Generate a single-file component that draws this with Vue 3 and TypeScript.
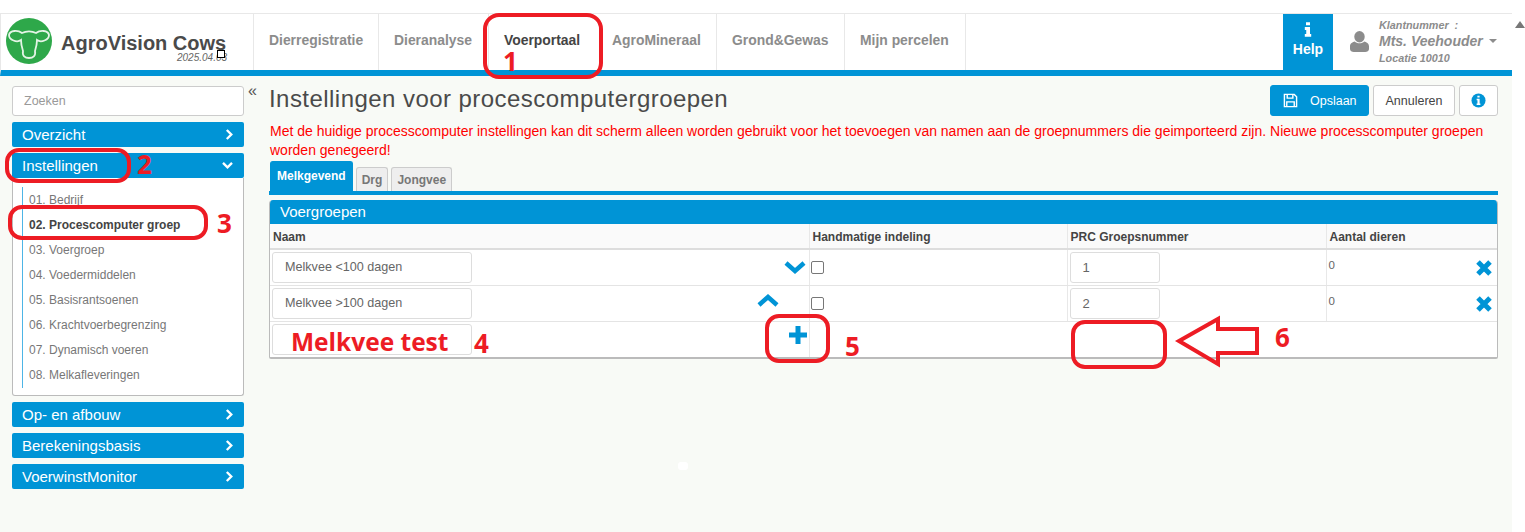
<template>
  <div class="app">
    <div class="content">
      <div class="top-gap"></div>
      <header class="header">
        <div class="brand">
          <svg class="logo" viewBox="0 0 46 46" width="46" height="46">
            <circle cx="23" cy="23" r="23" fill="#2ea84a" />
            <path d="M16 15 C20 13 26 13 30 15 C34 12 42 12 43 17 C43 22 35 25 31 22 C31 27 30 30 29 33 C30 38 27 40 23 40 C19 40 16 38 17 33 C16 30 15 27 15 22 C11 25 3 22 3 17 C4 12 12 12 16 15 Z" fill="none" stroke="#e4f4e6" stroke-width="1.8" />
          </svg>
          <div class="brand-text">
            <div class="brand-name">AgroVision Cows</div>
            <div class="brand-version">2025.04.03</div>
          </div>
          <span class="cursor-box"></span>
        </div>
        <nav class="nav">
          <a v-for="item in navItems" :key="item.label" class="nav-item" :class="{ active: item.active }" :style="{ width: item.width + 'px' }">{{ item.label }}</a>
        </nav>
        <div class="help">
          <svg viewBox="0 0 10 18" width="8" height="15"><path d="M2.5 0h5v3.6h-5zM1 6h6.500v8.500H9V18H1v-3.500h1.800V9.500H1z" fill="#fff" /></svg>
          <span>Help</span>
        </div>
        <div class="user">
          <svg class="user-icon" viewBox="0 0 20 22" width="19" height="21">
            <ellipse cx="10" cy="6" rx="5.500" ry="6" fill="#8c8c8c" />
            <path d="M0 19 V16 C0 13 3 11.500 5 11 C7 13.500 13 13.500 15 11 C17 11.500 20 13 20 16 V19 C20 21 18 22 16 22 H4 C2 22 0 21 0 19 Z" fill="#8c8c8c" />
          </svg>
          <div class="user-text">
            <div class="user-small">Klantnummer &nbsp;:</div>
            <div class="user-name">Mts. Veehouder <span class="caret"></span></div>
            <div class="user-loc">Locatie 10010</div>
          </div>
        </div>
      </header>

      <div class="body">
        <aside class="sidebar">
          <div class="search">Zoeken</div>
          <div class="menu-head">Overzicht<svg viewBox="0 0 10 14" width="9" height="13"><path d="M2 2l5 5-5 5" class="chev" /></svg></div>
          <div class="menu-head">Instellingen<svg viewBox="0 0 14 10" width="13" height="9"><path d="M2 2l5 5 5-5" class="chev" /></svg></div>
          <div class="submenu">
            <ul>
              <li v-for="(sub, i) in subItems" :key="sub" :class="{ current: i === 1 }">{{ sub }}</li>
            </ul>
          </div>
          <div v-for="head in lowerHeads" :key="head" class="menu-head">{{ head }}<svg viewBox="0 0 10 14" width="9" height="13"><path d="M2 2l5 5-5 5" class="chev" /></svg></div>
        </aside>

        <div class="collapse">«</div>

        <main class="main">
          <div class="title-row">
            <h1>Instellingen voor procescomputergroepen</h1>
            <div class="actions">
              <button class="btn primary">
                <svg viewBox="0 0 16 16" width="15" height="15">
                  <path d="M1.500 1.500h10.500l2.500 2.500v10.500h-13z" fill="none" stroke="#fff" stroke-width="1.500" />
                  <path d="M4.500 2v3.500h6V2M4 14.500V9.500h8v5" fill="none" stroke="#fff" stroke-width="1.500" />
                </svg>
                Opslaan
              </button>
              <button class="btn cancel">Annuleren</button>
              <button class="btn info">
                <svg viewBox="0 0 16 16" width="15" height="15">
                  <circle cx="8" cy="8" r="7.500" fill="#0094d6" />
                  <path d="M6.800 2.800h2.400v2h-2.400zM6 6.200h3.200v5H10v1.500H6v-1.500h.9V7.700H6z" fill="#fff" />
                </svg>
              </button>
            </div>
          </div>
          <p class="warning">Met de huidige processcomputer instellingen kan dit scherm alleen worden gebruikt voor het toevoegen van namen aan de groepnummers die geimporteerd zijn. Nieuwe processcomputer groepen worden genegeerd!</p>
          <div class="tabs">
            <div class="tab active">Melkgevend</div>
            <div class="tab">Drg</div>
            <div class="tab">Jongvee</div>
          </div>
          <section class="panel">
            <div class="panel-head">Voergroepen</div>
            <table>
              <colgroup>
                <col style="width: 539px" />
                <col style="width: 258px" />
                <col style="width: 259px" />
                <col />
              </colgroup>
              <thead>
                <tr>
                  <th>Naam</th>
                  <th>Handmatige indeling</th>
                  <th>PRC Groepsnummer</th>
                  <th>Aantal dieren</th>
                </tr>
              </thead>
              <tbody>
                <tr v-for="row in rows" :key="row.nr">
                  <td>
                    <div class="name-cell">
                      <div class="field name">{{ row.name }}</div>
                      <svg class="move" :class="row.dir" viewBox="0 0 24 14" width="24" height="14">
                        <path :d="row.dir === 'down' ? 'M3 3l9 8 9-8' : 'M3 11l9-8 9 8'" fill="none" stroke="#0094d6" stroke-width="4.500" />
                      </svg>
                    </div>
                  </td>
                  <td><span class="check"></span></td>
                  <td><div class="field nr">{{ row.nr }}</div></td>
                  <td>
                    <div class="count-cell">
                      <span class="count">0</span>
                      <svg class="remove" viewBox="0 0 18 18" width="18" height="18"><path d="M3 3l12 12M15 3L3 15" fill="none" stroke="#0094d6" stroke-width="5" /></svg>
                    </div>
                  </td>
                </tr>
                <tr class="add-row">
                  <td>
                    <div class="name-cell">
                      <div class="field name"></div>
                      <svg class="plus" viewBox="0 0 18 18" width="18" height="18"><path d="M9 0v18M0 9h18" fill="none" stroke="#0094d6" stroke-width="5" /></svg>
                    </div>
                  </td>
                  <td></td>
                  <td></td>
                  <td></td>
                </tr>
              </tbody>
            </table>
          </section>
        </main>
      </div>
    </div>
    <div class="scrollbar"><span class="scroll-up"></span></div>

    <!-- annotaties uit de handleiding -->
    <svg class="marks" viewBox="0 0 1525 532" width="1525" height="532">
      <g fill="none" stroke="#ed1c24" stroke-width="4">
        <rect x="485" y="15" width="116" height="62" rx="14" />
        <rect x="7" y="150" width="122" height="31" rx="12" />
        <rect x="10" y="207" width="196" height="31" rx="12" />
        <rect x="767" y="316" width="61" height="45" rx="12" />
        <rect x="1073" y="322" width="92" height="45" rx="12" />
        <path d="M1179 341L1218 319V329H1257V353H1218V364Z" />
      </g>
    </svg>
    <span class="mark-text big">Melkvee test</span>
    <span v-for="m in markNumbers" :key="m.n" class="mark-text num" :style="{ left: m.x + 'px', top: m.y + 'px' }">{{ m.n }}</span>
    <span class="spot"></span>
  </div>
</template>

<script setup lang="ts">
const navItems = [
  { label: 'Dierregistratie', width: 125 },
  { label: 'Dieranalyse', width: 110 },
  { label: 'Voerportaal', width: 108, active: true },
  { label: 'AgroMineraal', width: 120 },
  { label: 'Grond&Gewas', width: 128 },
  { label: 'Mijn percelen', width: 121 }
]

const subItems = [
  '01. Bedrijf',
  '02. Procescomputer groep',
  '03. Voergroep',
  '04. Voedermiddelen',
  '05. Basisrantsoenen',
  '06. Krachtvoerbegrenzing',
  '07. Dynamisch voeren',
  '08. Melkafleveringen'
]

const lowerHeads = ['Op- en afbouw', 'Berekeningsbasis', 'VoerwinstMonitor']

const rows = [
  { name: 'Melkvee <100 dagen', nr: 1, dir: 'down' },
  { name: 'Melkvee >100 dagen', nr: 2, dir: 'up' }
]

const markNumbers = [
  { n: 1, x: 503, y: 50 },
  { n: 2, x: 137, y: 153 },
  { n: 3, x: 217, y: 212 },
  { n: 4, x: 474, y: 332 },
  { n: 5, x: 845, y: 335 },
  { n: 6, x: 1275, y: 326 }
]
</script>

<style>
html,
body {
  margin: 0;
  overflow: hidden;
}
</style>

<style scoped>
.app {
  position: relative;
  display: flex;
  width: 1525px;
  height: 532px;
  overflow: hidden;
  background: #fff;
  font-family: "Liberation Sans", Arial, sans-serif;
  color: #444;
}

.content {
  width: 1513px;
  display: flex;
  flex-direction: column;
  background: #f8faf6;
}

.top-gap {
  height: 13px;
  background: #fff;
  border-bottom: 1px solid #e8e8e8;
}

.header {
  display: flex;
  height: 56px;
  flex: none;
  background: #fff;
  border-bottom: 6px solid #0094d6;
  border-left: 1px solid #e8e8e8;
}

.brand {
  position: relative;
  display: flex;
  align-items: flex-start;
  width: 253px;
  flex: none;
  padding: 4px 0 0 5px;
  box-sizing: border-box;
  border-right: 1px solid #e8e8e8;
}

.brand-text {
  margin-left: 9px;
}

.brand-name {
  margin-top: 15px;
  font-size: 20px;
  font-weight: bold;
  color: #4a4a4a;
  line-height: 21px;
  white-space: nowrap;
}

.brand-version {
  margin: -2px 0 0 116px;
  font-size: 10px;
  font-style: italic;
  line-height: 11px;
  color: #666;
}

.cursor-box {
  position: absolute;
  left: 216px;
  top: 36px;
  width: 6px;
  height: 6px;
  border: 1px solid #000;
  background: #fff;
}

.nav {
  display: flex;
  flex: 1;
}

.nav-item {
  box-sizing: border-box;
  padding: 18px 0 0 15px;
  font-size: 13.900px;
  font-weight: bold;
  color: #8c8c8c;
  border-right: 1px solid #e8e8e8;
  white-space: nowrap;
}

.nav-item.active {
  color: #444;
  border-right: none;
}

.help {
  display: flex;
  flex-direction: column;
  align-items: center;
  gap: 4px;
  width: 50px;
  padding-top: 8px;
  box-sizing: border-box;
  background: #0094d6;
  color: #fff;
  font-size: 14px;
  font-weight: bold;
}

.user {
  display: flex;
  align-items: center;
  width: 179px;
  padding-left: 17px;
  box-sizing: border-box;
  color: #8c8c8c;
  font-style: italic;
  font-weight: bold;
}

.user-icon {
  flex: none;
  margin-top: -2px;
}

.user-text {
  margin-left: 10px;
}

.user-small {
  font-size: 10.800px;
  line-height: 13px;
}

.user-name {
  font-size: 14px;
  line-height: 19px;
  white-space: nowrap;
}

.user-loc {
  font-size: 10.800px;
  line-height: 14px;
}

.caret {
  display: inline-block;
  margin-left: 2px;
  vertical-align: 3px;
  border: 4px solid transparent;
  border-top-color: #8c8c8c;
  border-bottom: none;
}

.body {
  display: flex;
  align-items: flex-start;
  flex: 1;
}

.sidebar {
  width: 232px;
  flex: none;
  margin: 10px 0 0 12px;
}

.search {
  height: 30px;
  box-sizing: border-box;
  padding: 0 11px;
  line-height: 28px;
  font-size: 12.500px;
  color: #999;
  background: #fff;
  border: 1px solid #ccc;
  border-radius: 3px;
}

.menu-head {
  display: flex;
  align-items: center;
  justify-content: space-between;
  height: 25px;
  margin-top: 6px;
  padding: 0 10px 0 10px;
  box-sizing: border-box;
  background: #0094d6;
  color: #fff;
  font-size: 15px;
  border-radius: 2px;
}

.chev {
  fill: none;
  stroke: #fff;
  stroke-width: 2.600;
}

.submenu {
  background: #fff;
  height: 218px;
  box-sizing: border-box;
  padding-top: 9px;
  border: 1px solid #bbb;
  border-top: none;
  border-radius: 0 0 3px 3px;
}

.submenu ul {
  list-style: none;
  margin: 0 0 0 9px;
  padding: 1px 0 0 6px;
  border-left: 1px solid #4db5e6;
}

.submenu li {
  height: 25px;
  line-height: 25px;
  font-size: 12px;
  color: #777;
}

.submenu li.current {
  font-weight: bold;
  color: #444;
}

.collapse {
  width: 25px;
  flex: none;
  margin-top: 7px;
  padding-left: 4px;
  box-sizing: border-box;
  font-size: 16px;
  line-height: 16px;
  color: #555;
}

.main {
  width: 1229px;
  flex: none;
}

.title-row {
  display: flex;
  justify-content: space-between;
  height: 46px;
  align-items: flex-start;
}

h1 {
  margin: 9px 0 0;
  font-size: 24px;
  font-weight: normal;
  line-height: 28px;
  letter-spacing: 0.45px;
  color: #4a4a4a;
}

.actions {
  display: flex;
  gap: 4px;
  margin-top: 9px;
}

.btn {
  height: 31px;
  padding: 0;
  font: 12.500px "Liberation Sans", Arial, sans-serif;
  color: #444;
  background: #fff;
  border: 1px solid #ccc;
  border-radius: 3px;
}

.btn.primary {
  display: flex;
  align-items: center;
  gap: 12px;
  width: 99px;
  padding-left: 12px;
  background: #0094d6;
  border-color: #0094d6;
  color: #fff;
}

.btn.cancel {
  width: 82px;
}

.btn.info {
  display: flex;
  align-items: center;
  justify-content: center;
  width: 39px;
}

.warning {
  margin: 0 0 0 1px;
  font-size: 14px;
  line-height: 19px;
  color: #f00;
}

.tabs {
  display: flex;
  align-items: flex-end;
  gap: 3px;
  height: 30px;
  margin-top: 1px;
  padding-left: 1px;
  border-bottom: 4px solid #0094d6;
}

.tab {
  box-sizing: border-box;
  height: 24px;
  padding: 0 5px;
  line-height: 24px;
  font-size: 12px;
  font-weight: bold;
  color: #777;
  background: #eee;
  border: 1px solid #ccc;
  border-bottom: none;
  border-radius: 3px 3px 0 0;
}

.tab.active {
  height: 30px;
  padding: 0 6px;
  line-height: 28px;
  color: #fff;
  background: #0094d6;
  border-color: #0094d6;
}

.panel {
  margin-top: 5px;
  background: #fff;
  border: 1px solid #bbb;
  border-top: none;
  border-bottom-width: 2px;
  border-radius: 4px 4px 2px 2px;
  overflow: hidden;
}

.panel-head {
  height: 24px;
  padding-left: 10px;
  line-height: 24px;
  font-size: 15px;
  color: #fff;
  background: #0094d6;
}

table {
  width: 100%;
  border-collapse: collapse;
  table-layout: fixed;
}

th {
  height: 25px;
  padding: 2px 3px 0;
  box-sizing: border-box;
  text-align: left;
  font-size: 12px;
  color: #444;
  background: #fafafa;
  border-bottom: 2px solid #ddd;
  border-right: 1px solid #e8e8e8;
}

td {
  height: 36px;
  padding: 0 3px;
  box-sizing: border-box;
  border-bottom: 1px solid #e4e4e4;
  border-right: 1px solid #e8e8e8;
  vertical-align: middle;
}

th:last-child,
td:last-child {
  border-right: none;
}

.add-row td {
  border: none;
}

.add-row td:first-child {
  border-right: 1px solid #e8e8e8;
}

.name-cell {
  display: flex;
  align-items: center;
  margin-left: -1px;
}

.field {
  box-sizing: border-box;
  height: 31px;
  line-height: 29px;
  padding: 0 12px;
  font-size: 12.600px;
  color: #666;
  background: #fff;
  border: 1px solid #ddd;
  border-radius: 3px;
}

.name {
  width: 200px;
}

.nr {
  width: 90px;
  margin-left: -1px;
  font-size: 13px;
}

.move {
  margin-left: auto;
  margin-right: -1px;
}

.move.up {
  margin-right: 26px;
  margin-top: -4px;
}

.plus {
  margin-left: auto;
  margin-top: -8px;
  margin-right: -1px;
}

.check {
  display: block;
  width: 11px;
  height: 11px;
  margin-left: -2px;
  background: #fff;
  border: 1px solid #777;
  border-radius: 2px;
}

.count-cell {
  display: flex;
  justify-content: space-between;
  align-items: center;
  padding-right: 1px;
}

.count {
  margin: -5px 0 0 -1px;
  font-size: 11.500px;
  color: #666;
}

.remove {
  margin-top: 2px;
}

.scrollbar {
  flex: 1;
  background: #fff;
}

.scroll-up {
  display: block;
  margin: 21px 0 0 3px;
  width: 0;
  height: 0;
  border: 5px solid transparent;
  border-bottom: 7px solid #777;
  border-top: none;
}

.marks {
  position: absolute;
  left: 0;
  top: 0;
  pointer-events: none;
}

.mark-text {
  position: absolute;
  font-family: "Open Sans", sans-serif;
  font-weight: bold;
  color: #ed1c24;
  white-space: nowrap;
}

.big {
  left: 291px;
  top: 326px;
  font-size: 24.500px;
  line-height: 32px;
}

.num {
  font-size: 26px;
  line-height: 22px;
}

.spot {
  position: absolute;
  left: 678px;
  top: 462px;
  width: 10px;
  height: 8px;
  background: #fff;
  border-radius: 3px;
}
</style>
